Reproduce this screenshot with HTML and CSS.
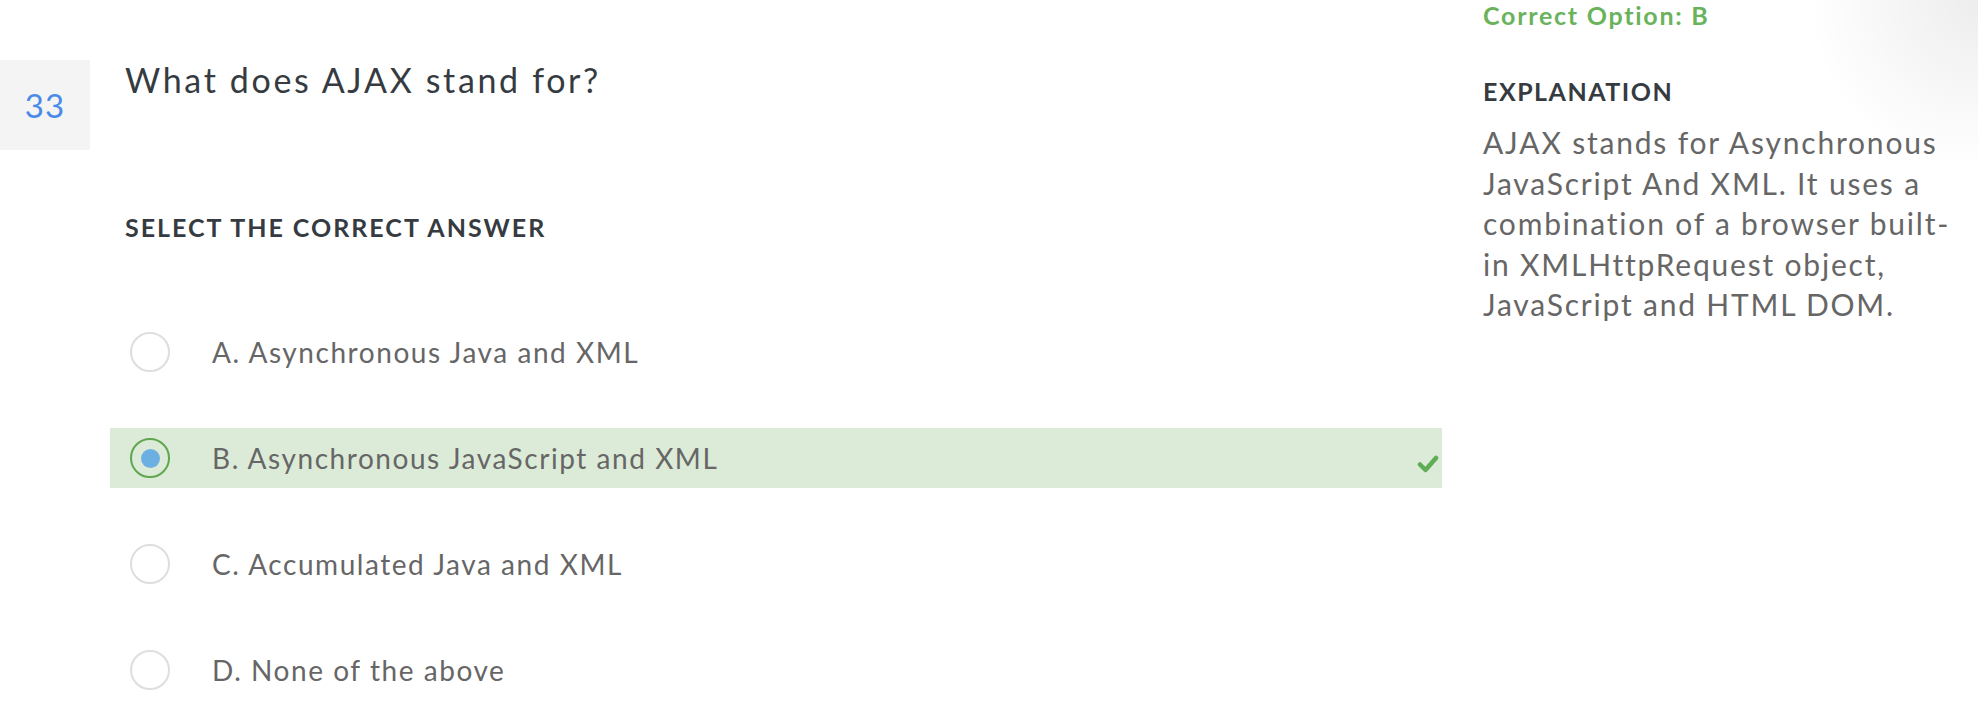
FILE: index.html
```html
<!DOCTYPE html>
<html lang="en">
<head>
<meta charset="utf-8">
<title>Question 33</title>
<link rel="stylesheet" href="styles.css">
</head>
<body>
<div class="page">
  <main class="main">
    <div class="qhead">
      <div class="qnum">33</div>
      <h1 class="qtext">What does AJAX stand for?</h1>
    </div>
    <h2 class="select-label">SELECT THE CORRECT ANSWER</h2>
    <ul class="options">
      <li class="option"><span class="radio"></span><span class="opt-text">A. Asynchronous Java and XML</span></li>
      <li class="option option-correct"><span class="radio radio-checked"><span class="dot"></span></span><span class="opt-text">B. Asynchronous JavaScript and XML</span>
        <svg class="check" viewBox="0 0 22 20" width="22" height="20"><path d="M3 10.5 L8.5 16 L19 4" fill="none" stroke="#5fae55" stroke-width="4.5" stroke-linecap="round" stroke-linejoin="round"/></svg>
      </li>
      <li class="option"><span class="radio"></span><span class="opt-text">C. Accumulated Java and XML</span></li>
      <li class="option"><span class="radio"></span><span class="opt-text">D. None of the above</span></li>
    </ul>
  </main>
  <aside class="side">
    <div class="correct">Correct Option: B</div>
    <h3 class="expl-title">EXPLANATION</h3>
    <p class="expl-text">AJAX stands for Asynchronous JavaScript And XML. It uses a combination of a browser built-in XMLHttpRequest object, JavaScript and HTML DOM.</p>
  </aside>
</div>
</body>
</html>
```

FILE: styles.css
```css
html, body {
  margin: 0;
  padding: 0;
}
body {
  width: 1978px;
  height: 706px;
  overflow: hidden;
  font-family: Lato, "Open Sans", sans-serif;
  background: radial-gradient(circle at 100% 0, rgba(0,0,0,0.07), rgba(0,0,0,0) 170px), #fff;
  color: #666;
}
.page {
  display: flex;
  align-items: flex-start;
}
.main {
  width: 1442px;
  flex: none;
}
.qhead {
  display: flex;
  align-items: flex-start;
  gap: 35px;
  margin-top: 60px;
}
.qnum {
  width: 90px;
  height: 90px;
  background: #f4f4f4;
  color: #4a8ae8;
  font-size: 33px;
  font-weight: 400;
  letter-spacing: 1px;
  display: flex;
  align-items: center;
  justify-content: center;
}
.qtext {
  margin: 0;
  font-size: 34px;
  font-weight: 400;
  line-height: 40px;
  color: #363b41;
  letter-spacing: 2.65px;
}
.select-label {
  margin: 62px 0 0 125px;
  font-size: 25px;
  font-weight: 700;
  line-height: 30px;
  color: #363b41;
  letter-spacing: 2px;
}
.options {
  list-style: none;
  margin: 80px 0 0 110px;
  padding: 0;
  display: flex;
  flex-direction: column;
  gap: 46px;
}
.option {
  height: 60px;
  display: flex;
  align-items: center;
  padding-left: 20px;
}
.option-correct {
  background: #dcebd7;
}
.radio {
  width: 40px;
  height: 40px;
  box-sizing: border-box;
  border: 2px solid #dedede;
  border-radius: 50%;
  background: #fff;
  flex: none;
  display: flex;
  align-items: center;
  justify-content: center;
}
.radio-checked {
  border-color: #5fa650;
  background: transparent;
}
.dot {
  width: 19px;
  height: 19px;
  border-radius: 50%;
  background: #6cb0e3;
}
.opt-text {
  margin-left: 42px;
  font-size: 28px;
  color: #666;
  letter-spacing: 1.55px;
}
.check {
  margin-left: auto;
  margin-right: 3px;
  margin-top: 12px;
}
.side {
  margin-left: 41px;
  width: 478px;
  flex: none;
}
.correct {
  font-size: 25px;
  font-weight: 700;
  line-height: 30px;
  color: #6ab35c;
  letter-spacing: 1.75px;
}
.expl-title {
  margin: 46px 0 0;
  font-size: 25px;
  font-weight: 700;
  line-height: 30px;
  color: #363b41;
  letter-spacing: 1.5px;
}
.expl-text {
  margin: 16px 0 0;
  font-size: 30px;
  line-height: 40.5px;
  color: #666;
  letter-spacing: 1.8px;
}
```
